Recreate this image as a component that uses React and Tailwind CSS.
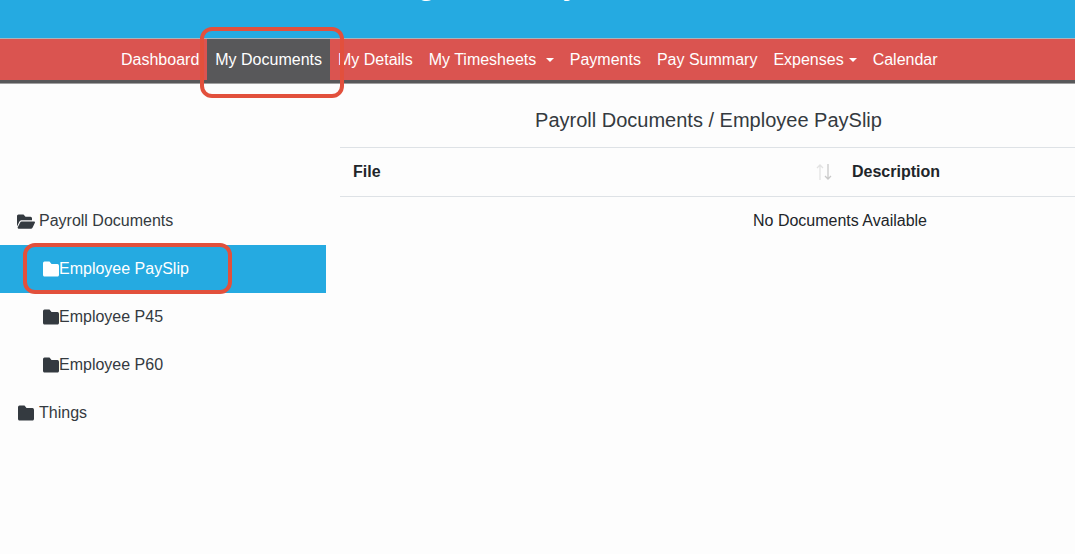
import { useState } from 'react';

const FolderIcon = ({ className }) => (
  <svg viewBox="0 0 512 512" preserveAspectRatio="none" className={`shrink-0 ${className}`} fill="currentColor">
    <path d="M464 128H272l-64-64H48C21.49 64 0 85.49 0 112v288c0 26.51 21.49 48 48 48h416c26.51 0 48-21.49 48-48V176c0-26.51-21.49-48-48-48z" />
  </svg>
);

const FolderOpenIcon = ({ className }) => (
  <svg viewBox="0 0 576 512" preserveAspectRatio="none" className={`shrink-0 ${className}`} fill="currentColor">
    <path d="M572.694 292.093L500.27 416.248A63.997 63.997 0 0 1 444.989 448H45.025c-18.523 0-30.064-20.093-20.731-36.093l72.424-124.155A64 64 0 0 1 152 256h399.964c18.523 0 30.064 20.093 20.73 36.093zM152 224h328v-48c0-26.51-21.49-48-48-48H272l-64-64H48C21.49 64 0 85.49 0 112v278.046l69.077-118.418C86.214 242.25 117.989 224 152 224z" />
  </svg>
);

const navItems = [
  { label: 'Dashboard' },
  { label: 'My Documents', active: true },
  { label: 'My Details' },
  { label: 'My Timesheets', caret: 'wide' },
  { label: 'Payments' },
  { label: 'Pay Summary' },
  { label: 'Expenses', caret: 'tight' },
  { label: 'Calendar' },
];

const App = () => {
  const [selected, setSelected] = useState('Employee PaySlip');
  const children = ['Employee PaySlip', 'Employee P45', 'Employee P60'];

  return (
    <div className="relative h-[554px] w-[1075px] overflow-hidden bg-[#fdfdfd] font-['Liberation_Sans',Arial,sans-serif] text-[16px] text-[#343a40]">
      {/* Banner, scrolled off the top: only descender tips of the title show */}
      <div className="h-[38px] overflow-hidden bg-[#25aae1]">
        <div className="-mt-[30px] pr-[100px] text-center text-[30px] leading-[30px] font-bold text-white">
          Agent Salary
        </div>
      </div>

      {/* Navbar */}
      <nav className="h-[45px] border-t border-[#a9b4bb] border-b-[3px] border-b-[#58585a] bg-[#da5450] shadow-[0_1px_0_#a0a0a0]">
        <ul className="flex h-[41px] pl-[113px]">
          {navItems.map((item) => (
            <li
              key={item.label}
              className={`flex h-full items-center px-[8px] text-white ${item.active ? 'bg-[#58585a]' : ''}`}
            >
              <span>{item.label}</span>
              {item.caret === 'wide' && (
                <span className="ml-[9.5px] mt-[1px] border-x-[4.8px] border-t-[4.8px] border-x-transparent border-t-white" />
              )}
              {item.caret === 'tight' && (
                <span className="ml-[5px] mt-[1px] border-x-[4.8px] border-t-[4.8px] border-x-transparent border-t-white" />
              )}
            </li>
          ))}
        </ul>
      </nav>

      <div className="flex">
        {/* Folder tree */}
        <aside className="w-[326px] pt-[114px] shrink-0">
          <div className="flex h-[48px] items-center pl-[17px]">
            <FolderOpenIcon className="h-[19px] w-[18px]" />
            <span className="ml-[4px]">Payroll Documents</span>
          </div>
          {children.map((name) => (
            <button
              key={name}
              onClick={() => setSelected(name)}
              className={`flex h-[48px] w-full items-center pl-[43px] ${selected === name ? 'bg-[#25aae1] text-white' : ''}`}
            >
              <FolderIcon className="h-[20px] w-[16px]" />
              <span>{name}</span>
            </button>
          ))}
          <div className="flex h-[48px] items-center pl-[18px]">
            <FolderIcon className="h-[20px] w-[16px]" />
            <span className="ml-[5px]">Things</span>
          </div>
        </aside>

        {/* Documents table */}
        <main className="ml-[14px] flex-1">
          <h2 className="h-[64px] pl-[2px] pt-[22px] text-center text-[20px] leading-[30px]">
            Payroll Documents / Employee PaySlip
          </h2>
          <div className="flex h-[50px] items-center border-y border-[#dee2e6] font-bold text-[#212529]">
            <div className="flex w-[499px] items-center justify-between pl-[13px] pr-[6px]">
              <span>File</span>
              <svg viewBox="0 0 18 18" className="h-[18px] w-[18px]" fill="none" strokeWidth="1.25">
                <path d="M5 17V2M2 5l3-3 3 3" stroke="#e2e2e2" />
                <path d="M13 1v15M10 13l3 3 3-3" stroke="#c8c8c8" />
              </svg>
            </div>
            <span className="ml-[13px]">Description</span>
          </div>
          <p className="pl-[265px] pt-[12px] text-center text-[#212529]">No Documents Available</p>
        </main>
      </div>

      {/* Screenshot annotations drawn over the page */}
      <div className="absolute left-[200px] top-[27px] h-[71px] w-[144px] rounded-[12px] border-4 border-[#e2503c]" />
      <div className="absolute left-[23px] top-[243px] h-[51px] w-[209px] rounded-[12px] border-4 border-[#e2503c]" />
    </div>
  );
};

export default App;
